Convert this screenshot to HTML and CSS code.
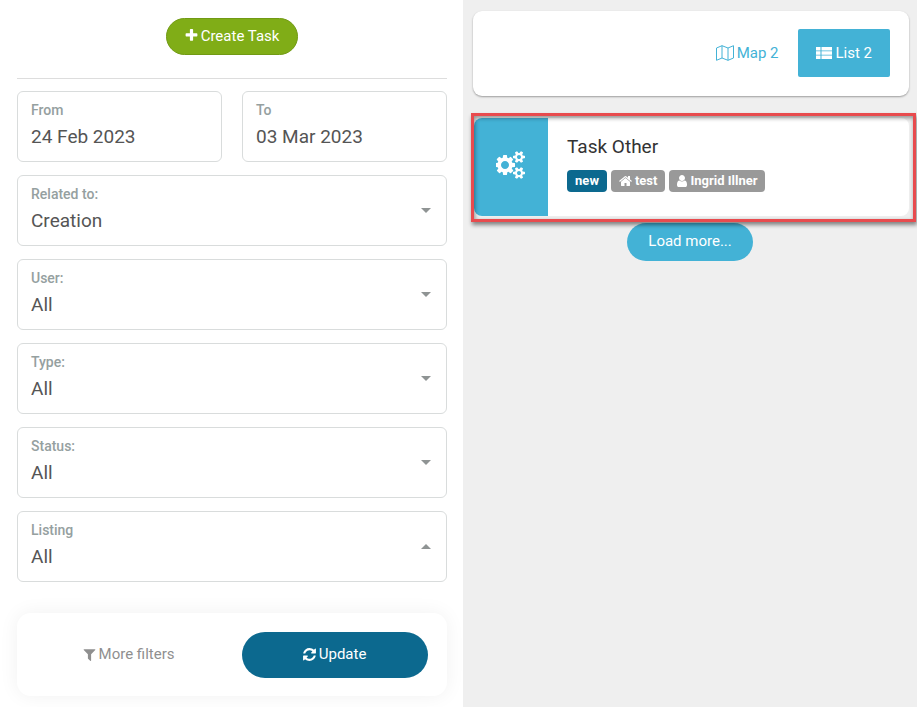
FILE: index.html
```html
<!DOCTYPE html>
<html lang="en">
<head>
<meta charset="utf-8">
<meta name="viewport" content="width=device-width, initial-scale=1">
<title>Tasks</title>
<link rel="stylesheet" href="styles.css">
</head>
<body>
<svg class="sprite" aria-hidden="true">
  <symbol id="caret" viewBox="0 0 10 5"><path d="M0 0h10L5 5z"/></symbol>
</svg>
<div class="layout">
  <form class="filters">
    <div class="create-row">
      <button type="button" class="pill create"><svg class="icon" viewBox="0 0 1792 1792" aria-hidden="true"><path d="M1600 736v192q0 40-28 68t-68 28h-416v416q0 40-28 68t-68 28h-192q-40 0-68-28t-28-68v-416h-416q-40 0-68-28t-28-68v-192q0-40 28-68t68-28h416v-416q0-40 28-68t68-28h192q40 0 68 28t28 68v416h416q40 0 68 28t28 68z"/></svg>Create Task</button>
    </div>
    <div class="fields">
      <div class="dates">
        <div class="field"><label for="from">From</label><input id="from" type="text" value="24 Feb 2023"></div>
        <div class="field"><label for="to">To</label><input id="to" type="text" value="03 Mar 2023"></div>
      </div>
      <div class="field"><label for="related">Related to:</label><select id="related"><option>Creation</option></select><svg class="caret" aria-hidden="true"><use href="#caret"/></svg></div>
      <div class="field"><label for="user">User:</label><select id="user"><option>All</option></select><svg class="caret" aria-hidden="true"><use href="#caret"/></svg></div>
      <div class="field"><label for="type">Type:</label><select id="type"><option>All</option></select><svg class="caret" aria-hidden="true"><use href="#caret"/></svg></div>
      <div class="field"><label for="status">Status:</label><select id="status"><option>All</option></select><svg class="caret" aria-hidden="true"><use href="#caret"/></svg></div>
      <div class="field"><label for="listing">Listing</label><select id="listing"><option>All</option></select><svg class="caret up" aria-hidden="true"><use href="#caret"/></svg></div>
    </div>
    <div class="actions">
      <button type="button" class="more"><svg class="icon filter" viewBox="192 0 1408 1792" aria-hidden="true"><path d="M1595 295q17 41-14 70l-493 493v742q0 42-39 59-13 5-25 5-27 0-45-19l-256-256q-19-19-19-45v-486l-493-493q-31-29-14-70 17-39 59-39h1280q42 0 59 39z"/></svg>More filters</button>
      <button type="submit" class="pill update"><svg class="icon" viewBox="0 0 1792 1792" aria-hidden="true"><path d="M1639 1056q0 5-1 7-64 268-268 434.500t-478 166.500q-146 0-282.500-55t-243.500-157l-129 129q-19 19-45 19t-45-19-19-45v-448q0-26 19-45t45-19h448q26 0 45 19t19 45-19 45l-137 137q71 66 161 102t187 36q134 0 250-65t186-179q11-17 53-117 8-23 30-23h192q13 0 22.500 9.500t9.500 22.500zm25-800v448q0 26-19 45t-45 19h-448q-26 0-45-19t-19-45 19-45l138-138q-148-137-349-137-134 0-250 65t-186 179q-11 17-53 117-8 23-30 23h-199q-13 0-22.500-9.500t-9.500-22.500v-7q65-268 270-434.500t480-166.500q146 0 284 55.500t245 156.500l130-129q19-19 45-19t45 19 19 45z"/></svg>Update</button>
    </div>
  </form>
  <main class="results">
    <nav class="views">
      <a class="view" href="#map"><svg class="icon map" viewBox="0 0 18 16" aria-hidden="true"><path d="M.5 3 6 .700l6 2.300 5.500-2.300V13L12 15.300 6 13 .5 15.300zM6 .700V13M12 3v12.300"/></svg>Map 2</a>
      <a class="view active" href="#list"><svg class="icon" viewBox="0 0 16 16" aria-hidden="true"><path d="M0 2h4.500v3.400H0zM5.500 2H16v3.400H5.500zM0 6.300h4.500v3.400H0zM5.500 6.300H16v3.400H5.500zM0 10.600h4.500V14H0zM5.500 10.600H16V14H5.500z"/></svg>List 2</a>
    </nav>
    <section class="highlight">
      <article class="task">
        <div class="task-type"><svg class="cogs" viewBox="0 0 1920 1792" aria-hidden="true"><path d="M832 896q0-106-75-181t-181-75-181 75-75 181 75 181 181 75 181-75 75-181zm768 512q0-52-38-90t-90-38-90 38-38 90q0 53 37.500 90.500t90.500 37.500 90.500-37.500 37.500-90.500zm0-1024q0-52-38-90t-90-38-90 38-38 90q0 53 37.500 90.500t90.500 37.500 90.500-37.500 37.500-90.500zm-384 421v185q0 10-7 19.500t-16 10.500l-155 24q-11 35-32 76 34 48 90 115 7 11 7 20 0 12-7 19-23 30-82.500 89.500t-78.500 59.500q-11 0-21-7l-115-90q-37 19-77 31-11 108-23 155-7 24-30 24h-186q-11 0-20-7.500t-10-17.500l-23-153q-34-10-75-31l-118 89q-7 7-20 7-11 0-21-8-144-133-144-160 0-9 7-19 10-14 41-53t47-61q-23-44-35-82l-152-24q-10-1-17-9.500t-7-19.500v-185q0-10 7-19.500t16-10.500l155-24q11-35 32-76-34-48-90-115-7-11-7-20 0-12 7-20 22-30 82-89t79-59q11 0 21 7l115 90q34-18 77-32 11-108 23-154 7-24 30-24h186q11 0 20 7.500t10 17.500l23 153q34 10 75 31l118-89q8-7 20-7 11 0 21 8 144 133 144 160 0 8-7 19-12 16-42 54t-45 60q23 48 34 82l152 23q10 2 17 10.500t7 19.500zm640 533v140q0 16-149 31-12 27-30 52 51 113 51 138 0 4-4 7-122 71-124 71-8 0-46-47t-52-68q-20 2-30 2t-30-2q-14 21-52 68t-46 47q-2 0-124-71-4-3-4-7 0-25 51-138-18-25-30-52-149-15-149-31v-140q0-16 149-31 13-29 30-52-51-113-51-138 0-4 4-7 4-2 35-20t59-34 30-16q8 0 46 46.500t52 67.500q20-2 30-2t30 2q51-71 92-112l6-2q4 0 124 70 4 3 4 7 0 25-51 138 17 23 30 52 149 15 149 31zm0-1024v140q0 16-149 31-12 27-30 52 51 113 51 138 0 4-4 7-122 71-124 71-8 0-46-47t-52-68q-20 2-30 2t-30-2q-14 21-52 68t-46 47q-2 0-124-71-4-3-4-7 0-25 51-138-18-25-30-52-149-15-149-31v-140q0-16 149-31 13-29 30-52-51-113-51-138 0-4 4-7 4-2 35-20t59-34 30-16q8 0 46 46.500t52 67.500q20-2 30-2t30 2q51-71 92-112l6-2q4 0 124 70 4 3 4 7 0 25-51 138 17 23 30 52 149 15 149 31z"/></svg></div>
        <div class="task-body">
          <h2>Task Other</h2>
          <div class="tags">
            <span class="tag new">new</span>
            <span class="tag"><svg class="tag-icon" viewBox="64 0 1664 1792" aria-hidden="true"><path d="M1472 992v480q0 26-19 45t-45 19h-384v-384h-256v384h-384q-26 0-45-19t-19-45v-480q0-1 .5-3t.5-3l575-474 575 474q1 2 1 6zm223-69l-62 74q-8 9-21 11h-3q-13 0-21-7l-692-577-692 577q-12 8-24 7-13-2-21-11l-62-74q-8-10-7-23.500t11-21.500l719-599q32-26 76-26t76 26l244 204v-195q0-14 9-23t23-9h192q14 0 23 9t9 23v408l219 182q10 8 11 21.500t-7 23.500z"/></svg>test</span>
            <span class="tag"><svg class="tag-icon person" viewBox="256 0 1280 1792" aria-hidden="true"><path d="M1536 1399q0 109-62.500 187t-150.500 78h-854q-88 0-150.500-78t-62.500-187q0-85 8.500-160.500t31.500-152 58.500-131 94-89 134.500-34.500q131 128 313 128t313-128q76 0 134.500 34.500t94 89 58.500 131 31.500 152 8.500 160.500zm-256-887q0 159-112.500 271.500t-271.500 112.500-271.500-112.500-112.500-271.500 112.500-271.500 271.500-112.500 271.500 112.500 112.500 271.500z"/></svg>Ingrid Illner</span>
          </div>
        </div>
      </article>
    </section>
    <div class="load-row"><button type="button" class="pill load">Load more...</button></div>
  </main>
</div>
</body>
</html>
```
FILE: styles.css
```css
* { box-sizing: border-box; }
body {
  margin: 0;
  background: #fff;
  color: #555;
  font: 15px/20px Roboto, "Liberation Sans", sans-serif;
}
button, input, select { font: inherit; color: inherit; }
button { cursor: pointer; }
.sprite { display: none; }
.layout {
  display: grid;
  grid-template-columns: 101fr 99fr;
  min-height: 100vh;
}
.icon { width: 15px; height: 15px; fill: currentColor; flex: none; }

/* Filter column */
.filters { padding: 18px 16px 11px 17px; }
.create-row {
  display: flex;
  justify-content: center;
  padding-bottom: 23px;
  border-bottom: 1px solid #ddd;
}
.pill {
  display: flex;
  align-items: center;
  justify-content: center;
  gap: 2px;
  border: 0;
  border-radius: 24px;
  color: #fff;
}
.create {
  height: 37px;
  padding: 0 18px 2px 17px;
  background: #80ad17;
  border: 1px solid #719a14;
}
.fields { display: grid; gap: 13px; margin-top: 12px; }
.dates { display: grid; grid-template-columns: 1fr 1fr; gap: 20px; }
.field {
  display: grid;
  grid-template-columns: 1fr 10px;
  grid-template-rows: 18px 34px;
  align-items: center;
  padding: 9px 15px 8px 13px;
  border: 1px solid #d9dcdc;
  border-radius: 6px;
}
.field label {
  grid-area: 1 / 1 / 2 / 3;
  color: #95a0a0;
  font-size: 14px;
  font-weight: 500;
  line-height: 18px;
}
.field input, .field select {
  grid-area: 2 / 1 / 3 / 3;
  width: 100%;
  height: 34px;
  padding: 0;
  border: 0;
  background: none;
  appearance: none;
  outline: 0;
  font-size: 19px;
}
.field select { padding-top: 2px; }
.caret {
  grid-area: 1 / 2 / 3 / 3;
  width: 10px;
  height: 5px;
  margin-bottom: 2px;
  fill: #8f9494;
  pointer-events: none;
}
.caret.up { transform: rotate(180deg); }
.actions {
  display: grid;
  grid-template-columns: 1fr 1fr;
  align-items: center;
  margin-top: 31px;
  padding: 19px 19px 18px;
  border-radius: 14px;
  box-shadow: 0 0 20px rgba(0, 0, 0, .06);
}
.more {
  display: flex;
  align-items: center;
  justify-content: center;
  gap: 3px;
  margin-right: 11px;
  padding: 0 0 2px;
  border: 0;
  background: none;
  color: #8f8f8f;
}
.filter { width: 13px; }
.update {
  height: 46px;
  margin-left: 10px;
  padding: 0 8px 2px 6px;
  background: #0c698f;
}

/* Results column */
.results { padding: 11px 1px 0 8px; background: #efefef; }
.views {
  display: flex;
  justify-content: flex-end;
  margin: 0 7px 0 2px;
  padding: 18px 19px 19px;
  background: #fff;
  border-radius: 9px;
  box-shadow: 0 1px 2px rgba(0, 0, 0, .35);
}
.view {
  display: flex;
  align-items: center;
  gap: 3px;
  height: 48px;
  padding: 0 20px;
  color: #43b2d6;
  text-decoration: none;
}
.view.active { padding: 0 18px; background: #43b2d6; color: #fff; border-radius: 2px; }
.view .icon { width: 16px; height: 16px; }
.view .map { width: 18px; fill: none; stroke: currentColor; }
.highlight {
  position: relative;
  margin-top: 17px;
  padding: 2px 4px 3px 0;
  border: 3px solid #e84b4e;
  box-shadow: 1px 3px 4px rgba(0, 0, 0, .45);
}
.highlight::after {
  content: "";
  position: absolute;
  inset: 0;
  box-shadow: inset 1px 2px 4px rgba(0, 0, 0, .4);
  pointer-events: none;
}
.task {
  display: flex;
  min-height: 98px;
  overflow: hidden;
  background: #fff;
  border-radius: 8px;
}
.task-type {
  display: flex;
  align-items: center;
  justify-content: center;
  width: 74px;
  padding-bottom: 4px;
  background: #43b2d6;
}
.cogs { width: 30px; height: 28px; fill: #fff; }
.task-body { padding: 17px 19px; }
.task h2 {
  margin: 0 0 11px;
  color: #333;
  font-size: 19px;
  font-weight: 400;
  line-height: 24px;
}
.tags { display: flex; flex-wrap: wrap; gap: 4px; }
.tag {
  display: flex;
  align-items: center;
  gap: 3px;
  height: 22px;
  padding: 0 8px;
  background: #999;
  border-radius: 4px;
  color: #fff;
  font-size: 13px;
  font-weight: 700;
}
.tag.new { background: #0c698f; }
.tag-icon { width: 13px; height: 14px; fill: currentColor; }
.tag-icon.person { width: 10px; }
.load-row { display: flex; justify-content: center; margin: 1px 7px 0 0; }
.load { height: 38px; padding: 0 21px 2px; background: #43b2d6; }
```
